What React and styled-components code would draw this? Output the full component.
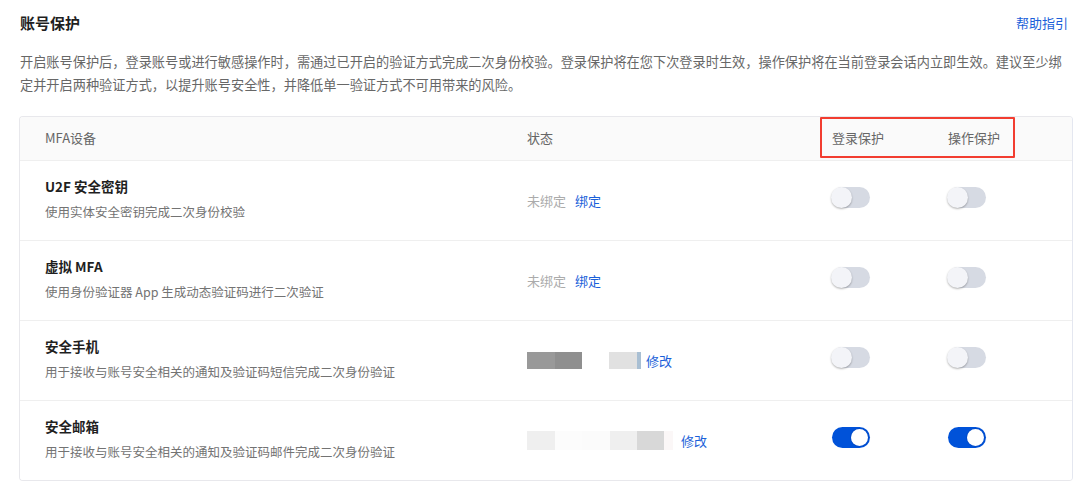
import React, { useState } from "react";
import styled, { createGlobalStyle } from "styled-components";

const GlobalStyle = createGlobalStyle`
  html, body {
    margin: 0;
    padding: 0;
    background: #ffffff;
  }
  body {
    font-family: "Noto Sans CJK SC", "Noto Sans", "Liberation Sans", sans-serif;
    -webkit-font-smoothing: antialiased;
  }
`;

const BLUE = "#0052d9";
const LINK = "#1b5fd9";

const Page = styled.div`
  padding: 12px 19px 0 20px;
  box-sizing: border-box;
  width: 1092px;
`;

const TopBar = styled.div`
  display: flex;
  align-items: center;
  justify-content: space-between;
  height: 22px;
`;

const Title = styled.h1`
  margin: 0;
  font-size: 15px;
  line-height: 22px;
  font-weight: 700;
  color: #1f1f1f;
`;

const HelpLink = styled.a`
  font-size: 13px;
  line-height: 22px;
  color: ${LINK};
  text-decoration: none;
  margin-right: 5px;
  cursor: pointer;
`;

const Intro = styled.p`
  margin: 16px 0 0;
  width: 1052px;
  font-size: 13.2px;
  line-height: 23px;
  color: #676767;
`;

const Table = styled.div`
  margin-top: 20px;
  margin-left: -1px;
  border: 1px solid #e8e8ec;
  border-right-color: #e4e7f0;
  border-radius: 4px;
  overflow: hidden;
`;

const Row = styled.div`
  display: grid;
  grid-template-columns: 482px 305px 116px 1fr;
  align-items: center;
  padding-left: 25px;
  height: ${(p) => (p.$head ? "43px" : "79px")};
  background: ${(p) => (p.$head ? "#fafafa" : "#ffffff")};
  border-top: ${(p) => (p.$first ? "none" : "1px solid #efefef")};
  position: relative;
`;

const HeadCell = styled.div`
  font-size: 13px;
  line-height: 20px;
  color: #666666;
  margin-top: -2px;
`;

const Marker = styled.div`
  position: absolute;
  left: 800px;
  top: 0px;
  width: 191px;
  height: 37px;
  border: 2px solid #f23d30;
  border-radius: 1px;
  pointer-events: none;
`;

const Device = styled.div`
  display: flex;
  flex-direction: column;
  gap: 6px;
  margin-top: -3px;
`;

const DeviceName = styled.div`
  font-size: 13.5px;
  line-height: 20px;
  font-weight: 600;
  color: #1f1f1f;
`;

const DeviceDesc = styled.div`
  font-size: 12.5px;
  line-height: 20px;
  color: #737373;
`;

const Status = styled.div`
  display: flex;
  align-items: center;
  font-size: 13px;
  line-height: 20px;
`;

const Muted = styled.span`
  color: #ababab;
  margin-right: 9px;
`;

const Action = styled.a`
  color: ${LINK};
  cursor: pointer;
  margin-left: ${(p) => p.$gap || 0}px;
`;

const Mosaic = styled.div`
  display: flex;
  height: ${(p) => p.$h}px;
  margin-left: ${(p) => p.$gap || 0}px;
`;

const Tile = styled.span`
  display: block;
  height: 100%;
`;

const Track = styled.button`
  position: relative;
  width: 38px;
  height: 21px;
  padding: 0;
  border: none;
  border-radius: 11px;
  background: ${(p) => (p.$on ? BLUE : "#d6dae3")};
  cursor: pointer;
  margin-top: -1px;
`;

const Knob = styled.span`
  position: absolute;
  top: ${(p) => (p.$on ? "2px" : "0px")};
  left: ${(p) => (p.$on ? "19px" : "-1px")};
  width: ${(p) => (p.$on ? "17px" : "21px")};
  height: ${(p) => (p.$on ? "17px" : "21px")};
  border-radius: 50%;
  background: ${(p) => (p.$on ? "#ffffff" : "#f3f4f8")};
  box-shadow: ${(p) =>
    p.$on ? "0 0 0 1px rgba(0,40,120,0.15)" : "0 1px 2px rgba(0,0,0,0.3)"};
`;

function Switch({ on, onToggle }) {
  return (
    <Track $on={on} onClick={onToggle} aria-pressed={on}>
      <Knob $on={on} />
    </Track>
  );
}

function Redacted({ tiles, h, gap }) {
  return (
    <Mosaic $h={h} $gap={gap}>
      {tiles.map(([w, c], i) => (
        <Tile key={i} style={{ width: w, background: c }} />
      ))}
    </Mosaic>
  );
}

const devices = [
  {
    id: "u2f",
    name: "U2F 安全密钥",
    desc: "使用实体安全密钥完成二次身份校验",
    bound: false,
    login: false,
    op: false,
  },
  {
    id: "mfa",
    name: "虚拟 MFA",
    desc: "使用身份验证器 App 生成动态验证码进行二次验证",
    bound: false,
    login: false,
    op: false,
  },
  {
    id: "phone",
    name: "安全手机",
    desc: "用于接收与账号安全相关的通知及验证码短信完成二次身份验证",
    bound: true,
    login: false,
    op: false,
    masked: [
      { h: 17, gap: 0, tiles: [[28, "#999999"], [27, "#8f8f8f"]] },
      { h: 17, gap: 27, tiles: [[28, "#e1e1e1"], [4, "#a9bfd3"]] },
    ],
    actionGap: 5,
  },
  {
    id: "mail",
    name: "安全邮箱",
    desc: "用于接收与账号安全相关的通知及验证码邮件完成二次身份验证",
    bound: true,
    login: true,
    op: true,
    masked: [
      {
        h: 19,
        gap: 0,
        tiles: [
          [28, "#efefef"],
          [27, "#fcfcfc"],
          [28, "#fbfbfb"],
          [27, "#efefef"],
          [27, "#d8d8d8"],
          [9, "#fbf7f7"],
        ],
      },
    ],
    actionGap: 8,
  },
];

export default function App() {
  const [state, setState] = useState(() =>
    Object.fromEntries(devices.map((d) => [d.id, { login: d.login, op: d.op }]))
  );

  const flip = (id, key) =>
    setState((s) => ({ ...s, [id]: { ...s[id], [key]: !s[id][key] } }));

  return (
    <>
      <GlobalStyle />
      <Page>
        <TopBar>
          <Title>账号保护</Title>
          <HelpLink>帮助指引</HelpLink>
        </TopBar>
        <Intro>
          开启账号保护后，登录账号或进行敏感操作时，需通过已开启的验证方式完成二次身份校验。登录保护将在您下次登录时生效，操作保护将在当前登录会话内立即生效。建议至少绑定并开启两种验证方式，以提升账号安全性，并降低单一验证方式不可用带来的风险。
        </Intro>
        <Table>
          <Row $head $first>
            <HeadCell>MFA设备</HeadCell>
            <HeadCell>状态</HeadCell>
            <HeadCell>登录保护</HeadCell>
            <HeadCell>操作保护</HeadCell>
            <Marker />
          </Row>
          {devices.map((d) => (
            <Row key={d.id}>
              <Device>
                <DeviceName>{d.name}</DeviceName>
                <DeviceDesc>{d.desc}</DeviceDesc>
              </Device>
              <Status>
                {d.bound ? (
                  <>
                    {d.masked.map((m, i) => (
                      <Redacted key={i} tiles={m.tiles} h={m.h} gap={m.gap} />
                    ))}
                    <Action $gap={d.actionGap}>修改</Action>
                  </>
                ) : (
                  <>
                    <Muted>未绑定</Muted>
                    <Action>绑定</Action>
                  </>
                )}
              </Status>
              <div>
                <Switch on={state[d.id].login} onToggle={() => flip(d.id, "login")} />
              </div>
              <div>
                <Switch on={state[d.id].op} onToggle={() => flip(d.id, "op")} />
              </div>
            </Row>
          ))}
        </Table>
      </Page>
    </>
  );
}
